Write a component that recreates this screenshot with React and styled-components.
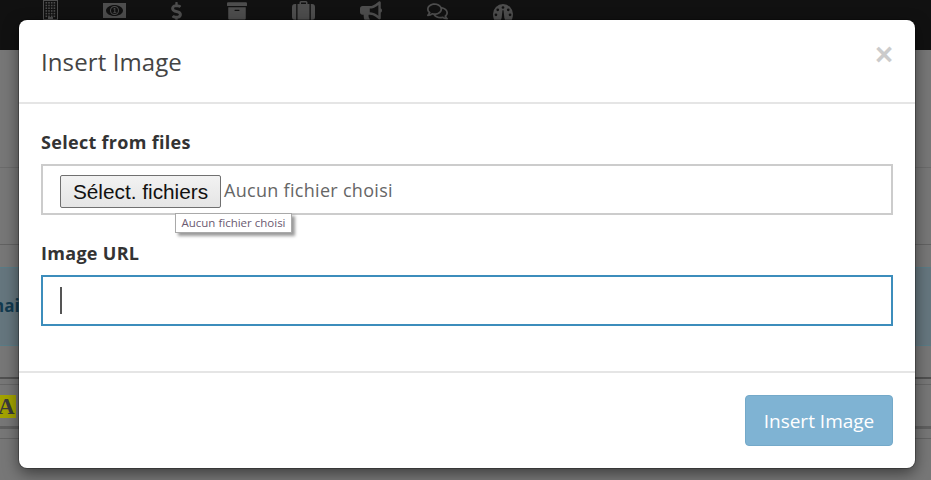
import React from 'react';
import styled, { createGlobalStyle } from 'styled-components';
import { FaDollarSign, FaArchive, FaBullhorn, FaRegComments } from 'react-icons/fa';

const GlobalStyle = createGlobalStyle`
    html, body {
        margin: 0;
        height: 100%;
        overflow: hidden;
        background: #777;
        font-family: "Open Sans", "Noto Sans", sans-serif;
    }
`;

const Page = styled.div`
    position: relative;
    width: 931px;
    height: 480px;
    overflow: hidden;
    background: #777;
`;

const TopBar = styled.div`
    height: 50px;
    background: #111;
    display: flex;
    align-items: flex-start;
    gap: 45px;
    padding-left: 43px;
    box-sizing: border-box;
    overflow: hidden;
`;

const TopIcon = styled.div`
    height: 30px;
    display: flex;
    align-items: flex-start;
    color: #4d4d4d;
    padding-top: ${p => p.$top || 0}px;
    box-sizing: border-box;

    svg {
        ${p => (p.$w ? `width: ${p.$w}px; height: ${p.$h}px;` : '')}
    }
`;

const BackRow = styled.div`
    height: ${p => p.$h}px;
    background: ${p => p.$bg || 'transparent'};
    border-bottom: ${p => p.$lw || 1}px solid ${p => p.$line || 'transparent'};
    border-top: ${p => (p.$topLine ? `1px solid ${p.$topLine}` : 'none')};
    box-sizing: border-box;
    overflow: hidden;
`;

const BackText = styled.span`
    display: block;
    font: bold 17px/76px "Open Sans", sans-serif;
    color: #123a50;
    margin-left: -7px;
`;

const Badge = styled.span`
    display: inline-block;
    margin: 10px 0 0 -5px;
    padding: 0 1px 0 3px;
    background: #a3a300;
    color: #3a3a3a;
    font: bold 23px/23px "Liberation Serif", serif;
`;

const Modal = styled.div`
    position: absolute;
    left: 19px;
    top: 20px;
    width: 896px;
    height: 448px;
    background: #fff;
    border-radius: 8px;
    box-shadow: 0 0 0 1px rgba(0, 0, 0, 0.25), 0 5px 15px rgba(0, 0, 0, 0.5);
    display: flex;
    flex-direction: column;
`;

const Header = styled.div`
    height: 82px;
    border-bottom: 2px solid #e5e5e5;
    display: flex;
    align-items: center;
    justify-content: space-between;
    padding: 0 22px;
`;

const Title = styled.h4`
    margin: 0;
    font-size: 24px;
    font-weight: 400;
    color: #444;
    letter-spacing: 0.1px;
`;

const Close = styled.span`
    font: bold 31px/1 "Liberation Sans", sans-serif;
    color: #cbcbcb;
    margin: -14px 0 0;
`;

const Body = styled.div`
    height: 269px;
    padding: 27px 22px 0;
    box-sizing: border-box;
    border-bottom: 2px solid #e5e5e5;
`;

const Label = styled.label`
    display: block;
    font-size: 18px;
    line-height: 22px;
    font-weight: 700;
    color: #333;
    letter-spacing: 0.3px;
    margin-bottom: 11px;
`;

const Field = styled.div`
    position: relative;
    height: 51px;
    box-sizing: border-box;
    border: 2px solid ${p => (p.$focus ? '#3c8dbc' : '#ccc')};
    padding: 0 17px;
    display: flex;
    align-items: center;
    margin-bottom: ${p => p.$mb || 0}px;
`;

const FileButton = styled.button`
    height: 33px;
    width: 161px;
    margin-top: 4px;
    padding: 0;
    border: 1px solid #707070;
    border-radius: 2px;
    background: linear-gradient(#f2f2f2, #e5e5e5);
    font: 20.8px "Liberation Sans", sans-serif;
    color: #111;
`;

const FileName = styled.span`
    margin: 1px 0 0 3px;
    font-size: 18px;
    color: #666;
    letter-spacing: 0.3px;
`;

const Tip = styled.div`
    position: absolute;
    left: 132px;
    top: 47px;
    width: 117px;
    height: 20px;
    text-align: center;
    line-height: 18px;
    font-size: 11.5px;
    color: #6b5a70;
    background: #fff;
    border: 1px solid #a9a9a9;
    box-shadow: 3px 3px 3px rgba(0, 0, 0, 0.4);
    white-space: nowrap;
    box-sizing: border-box;
`;

const Caret = styled.span`
    width: 2px;
    height: 27px;
    background: #555;
`;

const Footer = styled.div`
    flex: 1;
    display: flex;
    justify-content: flex-end;
    align-items: flex-start;
    padding: 22px 22px 0;
`;

const InsertButton = styled.button`
    width: 148px;
    height: 51px;
    border: 1px solid #74a9c9;
    border-radius: 4px;
    background: #7fb3d3;
    color: #fff;
    font-size: 19px;
    font-family: inherit;
`;

function BuildingIcon() {
    const cells = [];
    for (let r = 0; r < 6; r++) {
        for (let c = 0; c < 4; c++) {
            cells.push(<rect key={`${r}-${c}`} x={2.5 + c * 2.7} y={2 + r * 2.7} width="1.6" height="1.6" />);
        }
    }
    return (
        <svg width="15" height="20" viewBox="0 0 15 20" fill="currentColor">
            <path fillRule="evenodd" d="M0 0h15v20H0zM1 1v18h13V1z" />
            {cells}
            <rect x="5" y="17" width="5" height="3" />
        </svg>
    );
}

function BillIcon() {
    return (
        <svg width="23" height="15" viewBox="0 0 23 15" fill="currentColor">
            <path fillRule="evenodd" d="M0 0h23v15H0zM11.500 2C7 2 3 4.500 3 7.500S7 13 11.500 13S20 10.500 20 7.500S16 2 11.500 2z" />
            <path fillRule="evenodd" d="M11.500 3a4.500 4.500 0 1 1 0 9a4.500 4.500 0 0 1 0-9zM11.500 4a3.500 3.500 0 1 0 0 7a3.500 3.500 0 0 0 0-7z" />
            <path d="M11.300 5h1v4.300h1v.8h-3v-.8h1V6.100l-1 .5v-.9z" />
        </svg>
    );
}

function CaseIcon() {
    return (
        <svg width="23" height="20" viewBox="0 0 23 20" fill="currentColor">
            <path d="M7.500 4V2.500A1.500 1.500 0 0 1 9 1h5a1.500 1.500 0 0 1 1.500 1.500V4H14V2.500H9V4z" />
            <path d="M5.500 4h12v16h-12zM4.200 4v16H3a3 3 0 0 1-3-3V7a3 3 0 0 1 3-3zM18.800 4H20a3 3 0 0 1 3 3v10a3 3 0 0 1-3 3h-1.200z" />
        </svg>
    );
}

function DashIcon() {
    return (
        <svg width="20" height="19" viewBox="0 0 19 18" fill="currentColor">
            <path fillRule="evenodd" d="M9.500 0a9.500 9.500 0 0 1 9.500 9.500c0 3.500-1 6-2.500 8h-14C1 15.500 0 13 0 9.500A9.500 9.500 0 0 1 9.500 0zM9.500 2a1.300 1.300 0 1 0 0 2.600a1.300 1.300 0 0 0 0-2.600zM4.500 4.200a1.300 1.300 0 1 0 0 2.600a1.300 1.300 0 0 0 0-2.600zM14.500 4.200a1.300 1.300 0 1 0 0 2.600a1.300 1.300 0 0 0 0-2.600zM2.800 9a1.300 1.300 0 1 0 0 2.600a1.300 1.300 0 0 0 0-2.600zM16.200 9a1.300 1.300 0 1 0 0 2.600a1.300 1.300 0 0 0 0-2.600zM9 6l-.8 7.500a1.700 1.700 0 1 0 2.600 0L10 6z" />
        </svg>
    );
}

const topIcons = [
    { icon: <BuildingIcon /> },
    { icon: <BillIcon />, top: 3 },
    { icon: <FaDollarSign />, w: 11, h: 19, top: 2 },
    { icon: <FaArchive />, w: 20, h: 20, top: 1 },
    { icon: <CaseIcon /> },
    { icon: <FaBullhorn />, w: 22, h: 20, top: 1 },
    { icon: <FaRegComments />, w: 21, h: 19, top: 2 },
    { icon: <DashIcon />, top: 4 },
];

export default function App() {
    return (
        <Page>
            <GlobalStyle />
            <TopBar>
                {topIcons.map((item, i) => (
                    <TopIcon key={i} $w={item.w} $h={item.h} $top={item.top}>{item.icon}</TopIcon>
                ))}
            </TopBar>
            <BackRow $h={118} $line="#6b6b6b" />
            <BackRow $h={77} $line="#626262" />
            <BackRow $h={22} />
            <BackRow $h={79} $bg="#65767e" $line="#5a7c86" $topLine="#5a7c86"><BackText>nai</BackText></BackRow>
            <BackRow $h={33} $line="#505050" $lw={2} />
            <BackRow $h={6} $line="#666" />
            <BackRow $h={44} $line="#5f5f5f" $lw={3}><Badge>A</Badge></BackRow>
            <BackRow $h={10} $line="#636363" />
            <Modal>
                <Header>
                    <Title>Insert Image</Title>
                    <Close>×</Close>
                </Header>
                <Body>
                    <Label>Select from files</Label>
                    <Field $mb={27}>
                        <FileButton>Sélect. fichiers</FileButton>
                        <FileName>Aucun fichier choisi</FileName>
                        <Tip>Aucun fichier choisi</Tip>
                    </Field>
                    <Label>Image URL</Label>
                    <Field $focus><Caret /></Field>
                </Body>
                <Footer>
                    <InsertButton>Insert Image</InsertButton>
                </Footer>
            </Modal>
        </Page>
    );
}
